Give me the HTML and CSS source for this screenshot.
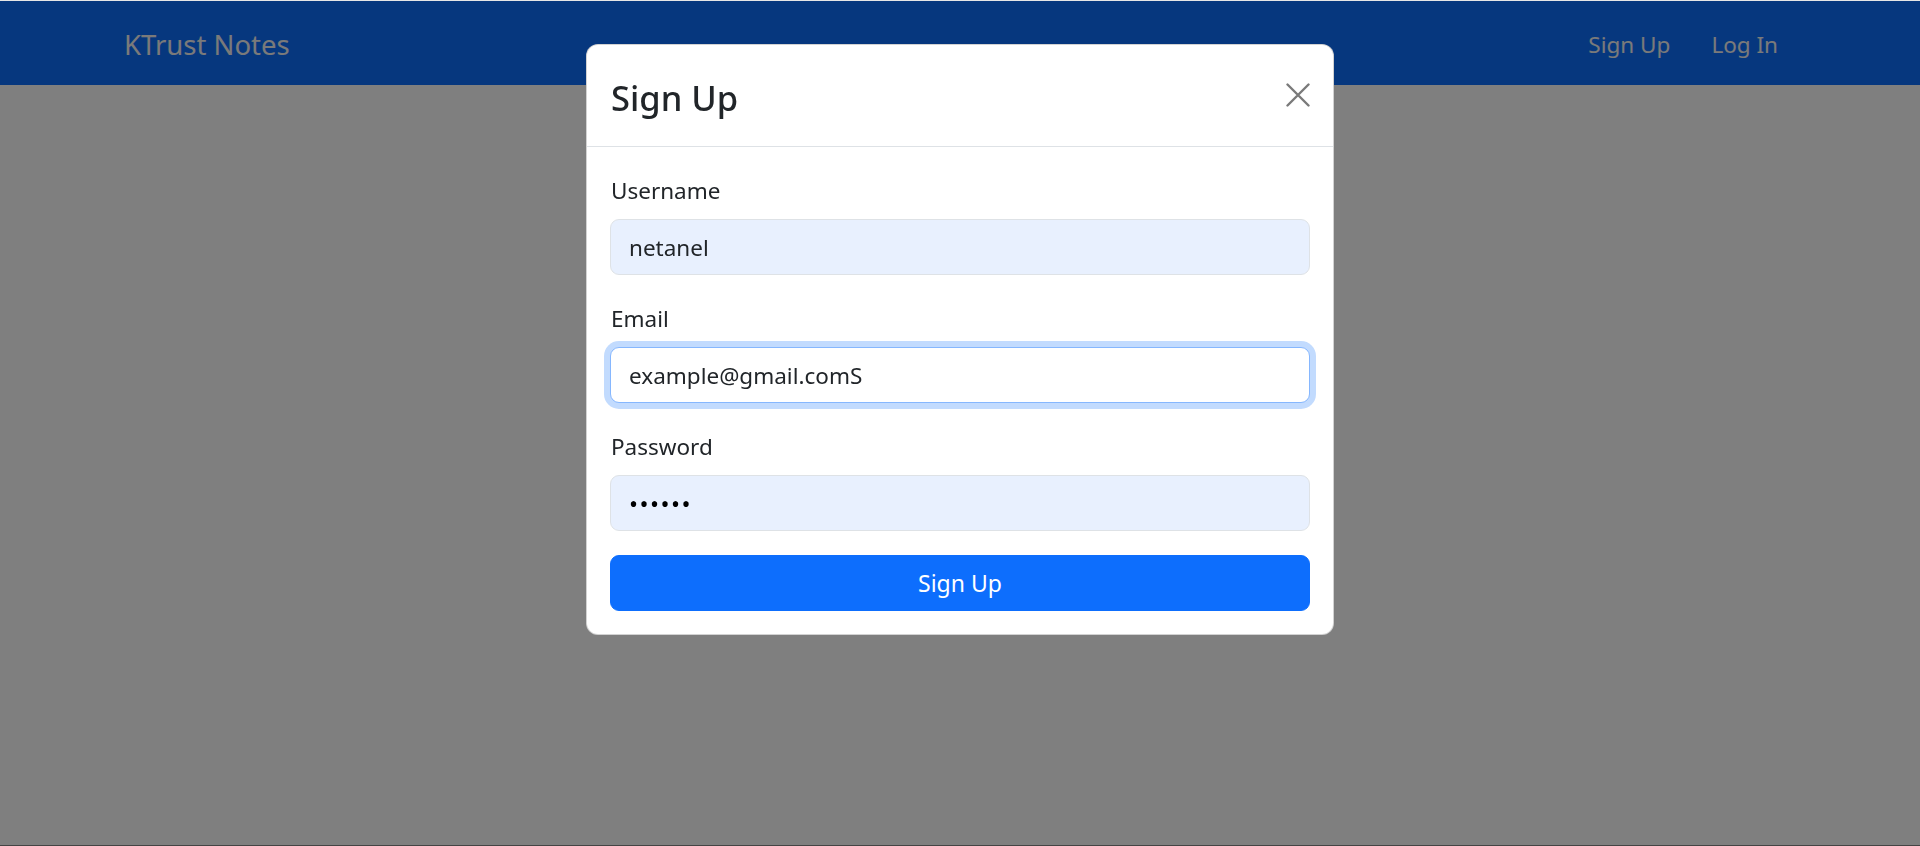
FILE: index.html
```html
<!DOCTYPE html>
<html lang="en">
<head>
<meta charset="utf-8">
<title>KTrust Notes</title>
<link rel="stylesheet" href="styles.css">
</head>
<body>
<div class="page">
  <header class="navbar">
    <div class="container">
      <a class="brand" href="#">KTrust Notes</a>
      <nav class="nav">
        <a class="nav-link" href="#">Sign Up</a>
        <a class="nav-link" href="#">Log In</a>
      </nav>
    </div>
  </header>
</div>

<div class="backdrop"></div>

<div class="modal">
  <div class="modal-dialog">
    <div class="modal-header">
      <h5 class="modal-title">Sign Up</h5>
      <button class="btn-close" type="button" aria-label="Close">
        <svg viewBox="0 0 24 24" width="24" height="24" aria-hidden="true">
          <path d="M1.5 1.5 L22.5 22.5 M22.5 1.5 L1.5 22.5" stroke="#7a7a7a" stroke-width="2.4" stroke-linecap="round" fill="none"/>
        </svg>
      </button>
    </div>
    <form class="modal-body">
      <div class="field">
        <label class="form-label" for="username">Username</label>
        <input class="form-control autofill" id="username" type="text" value="netanel">
      </div>
      <div class="field">
        <label class="form-label" for="email">Email</label>
        <input class="form-control focused" id="email" type="email" value="example@gmail.comS">
      </div>
      <div class="field">
        <label class="form-label" for="password">Password</label>
        <input class="form-control autofill password" id="password" type="password" value="secret">
      </div>
      <button class="btn-primary" type="button">Sign Up</button>
    </form>
  </div>
</div>
</body>
</html>
```

FILE: styles.css
```css
* {
  box-sizing: border-box;
}

html, body {
  margin: 0;
  padding: 0;
  height: 100%;
}

body {
  font-family: "Noto Sans", "Open Sans", sans-serif;
  font-size: 22.5px;
  line-height: 36px;
  color: #212529;
  background: #ffffff;
  overflow: hidden;
}

.page {
  height: 100vh;
  border-top: 1px solid #e6e6e6;
  border-bottom: 1px solid #444444;
  background: #ffffff;
}

.navbar {
  height: 84px;
  background: #0d6efd;
  display: flex;
  align-items: center;
}

.container {
  width: 1710px;
  margin: 0 auto;
  padding: 0 18px;
  display: flex;
  align-items: center;
  justify-content: space-between;
}

.brand {
  font-size: 27.5px;
  line-height: 45px;
  padding-top: 2px;
  color: #f4f4f4;
  text-decoration: none;
  padding-left: 1px;
}

.nav {
  display: flex;
  align-items: center;
  gap: 41px;
  margin-right: 19px;
  padding-top: 3px;
}

.nav-link {
  color: #f4f4f4;
  text-decoration: none;
  font-size: 22.5px;
  line-height: 36px;
}

.backdrop {
  position: fixed;
  top: 1px;
  bottom: 1px;
  left: 0;
  right: 0;
  background: rgba(0, 0, 0, 0.5);
}

.modal {
  position: fixed;
  inset: 0;
  display: flex;
  justify-content: center;
  align-items: flex-start;
}

.modal-dialog {
  width: 748px;
  margin-top: 44px;
  background: #ffffff;
  border: 1px solid rgba(0, 0, 0, 0.175);
  border-radius: 12px;
  overflow: hidden;
}

.modal-header {
  display: flex;
  align-items: center;
  justify-content: space-between;
  padding: 23px 23px 24px 24px;
  border-bottom: 1px solid #dee2e6;
}

.modal-title {
  margin: 0;
  font-size: 34.5px;
  line-height: 54px;
  padding-top: 3px;
  margin-bottom: -3px;
  font-weight: 500;
  color: #212529;
}

.btn-close {
  width: 24px;
  height: 24px;
  padding: 0;
  border: 0;
  background: transparent;
  display: flex;
  cursor: pointer;
}

.modal-body {
  padding: 24px 23px 23px 23px;
  display: flex;
  flex-direction: column;
  gap: 24px;
  margin: 0;
}

.field {
  display: flex;
  flex-direction: column;
  gap: 10px;
}

.form-label {
  display: block;
  font-size: 22.5px;
  line-height: 36px;
  padding-top: 2px;
  color: #212529;
  padding-left: 1px;
}

.form-control {
  display: block;
  width: 100%;
  height: 56px;
  padding: 9px 18px;
  font-family: inherit;
  font-size: 22.5px;
  line-height: 36px;
  color: #212529;
  background: #ffffff;
  border: 1px solid #dee2e6;
  border-radius: 9px;
  outline: none;
}

.form-control.autofill {
  background: #e8f0fe;
}

.form-control.focused {
  border-color: #86b7fe;
  box-shadow: 0 0 0 6px rgba(13, 110, 253, 0.25);
}

.form-control.password {
  color: #000000;
  font-size: 24px;
  letter-spacing: 1.5px;
}

.btn-primary {
  display: block;
  width: 100%;
  height: 56px;
  padding: 9px 18px;
  font-family: inherit;
  font-size: 23px;
  line-height: 36px;
  color: #ffffff;
  background: #0d6efd;
  border: 1px solid #0d6efd;
  border-radius: 9px;
  cursor: pointer;
}
```
